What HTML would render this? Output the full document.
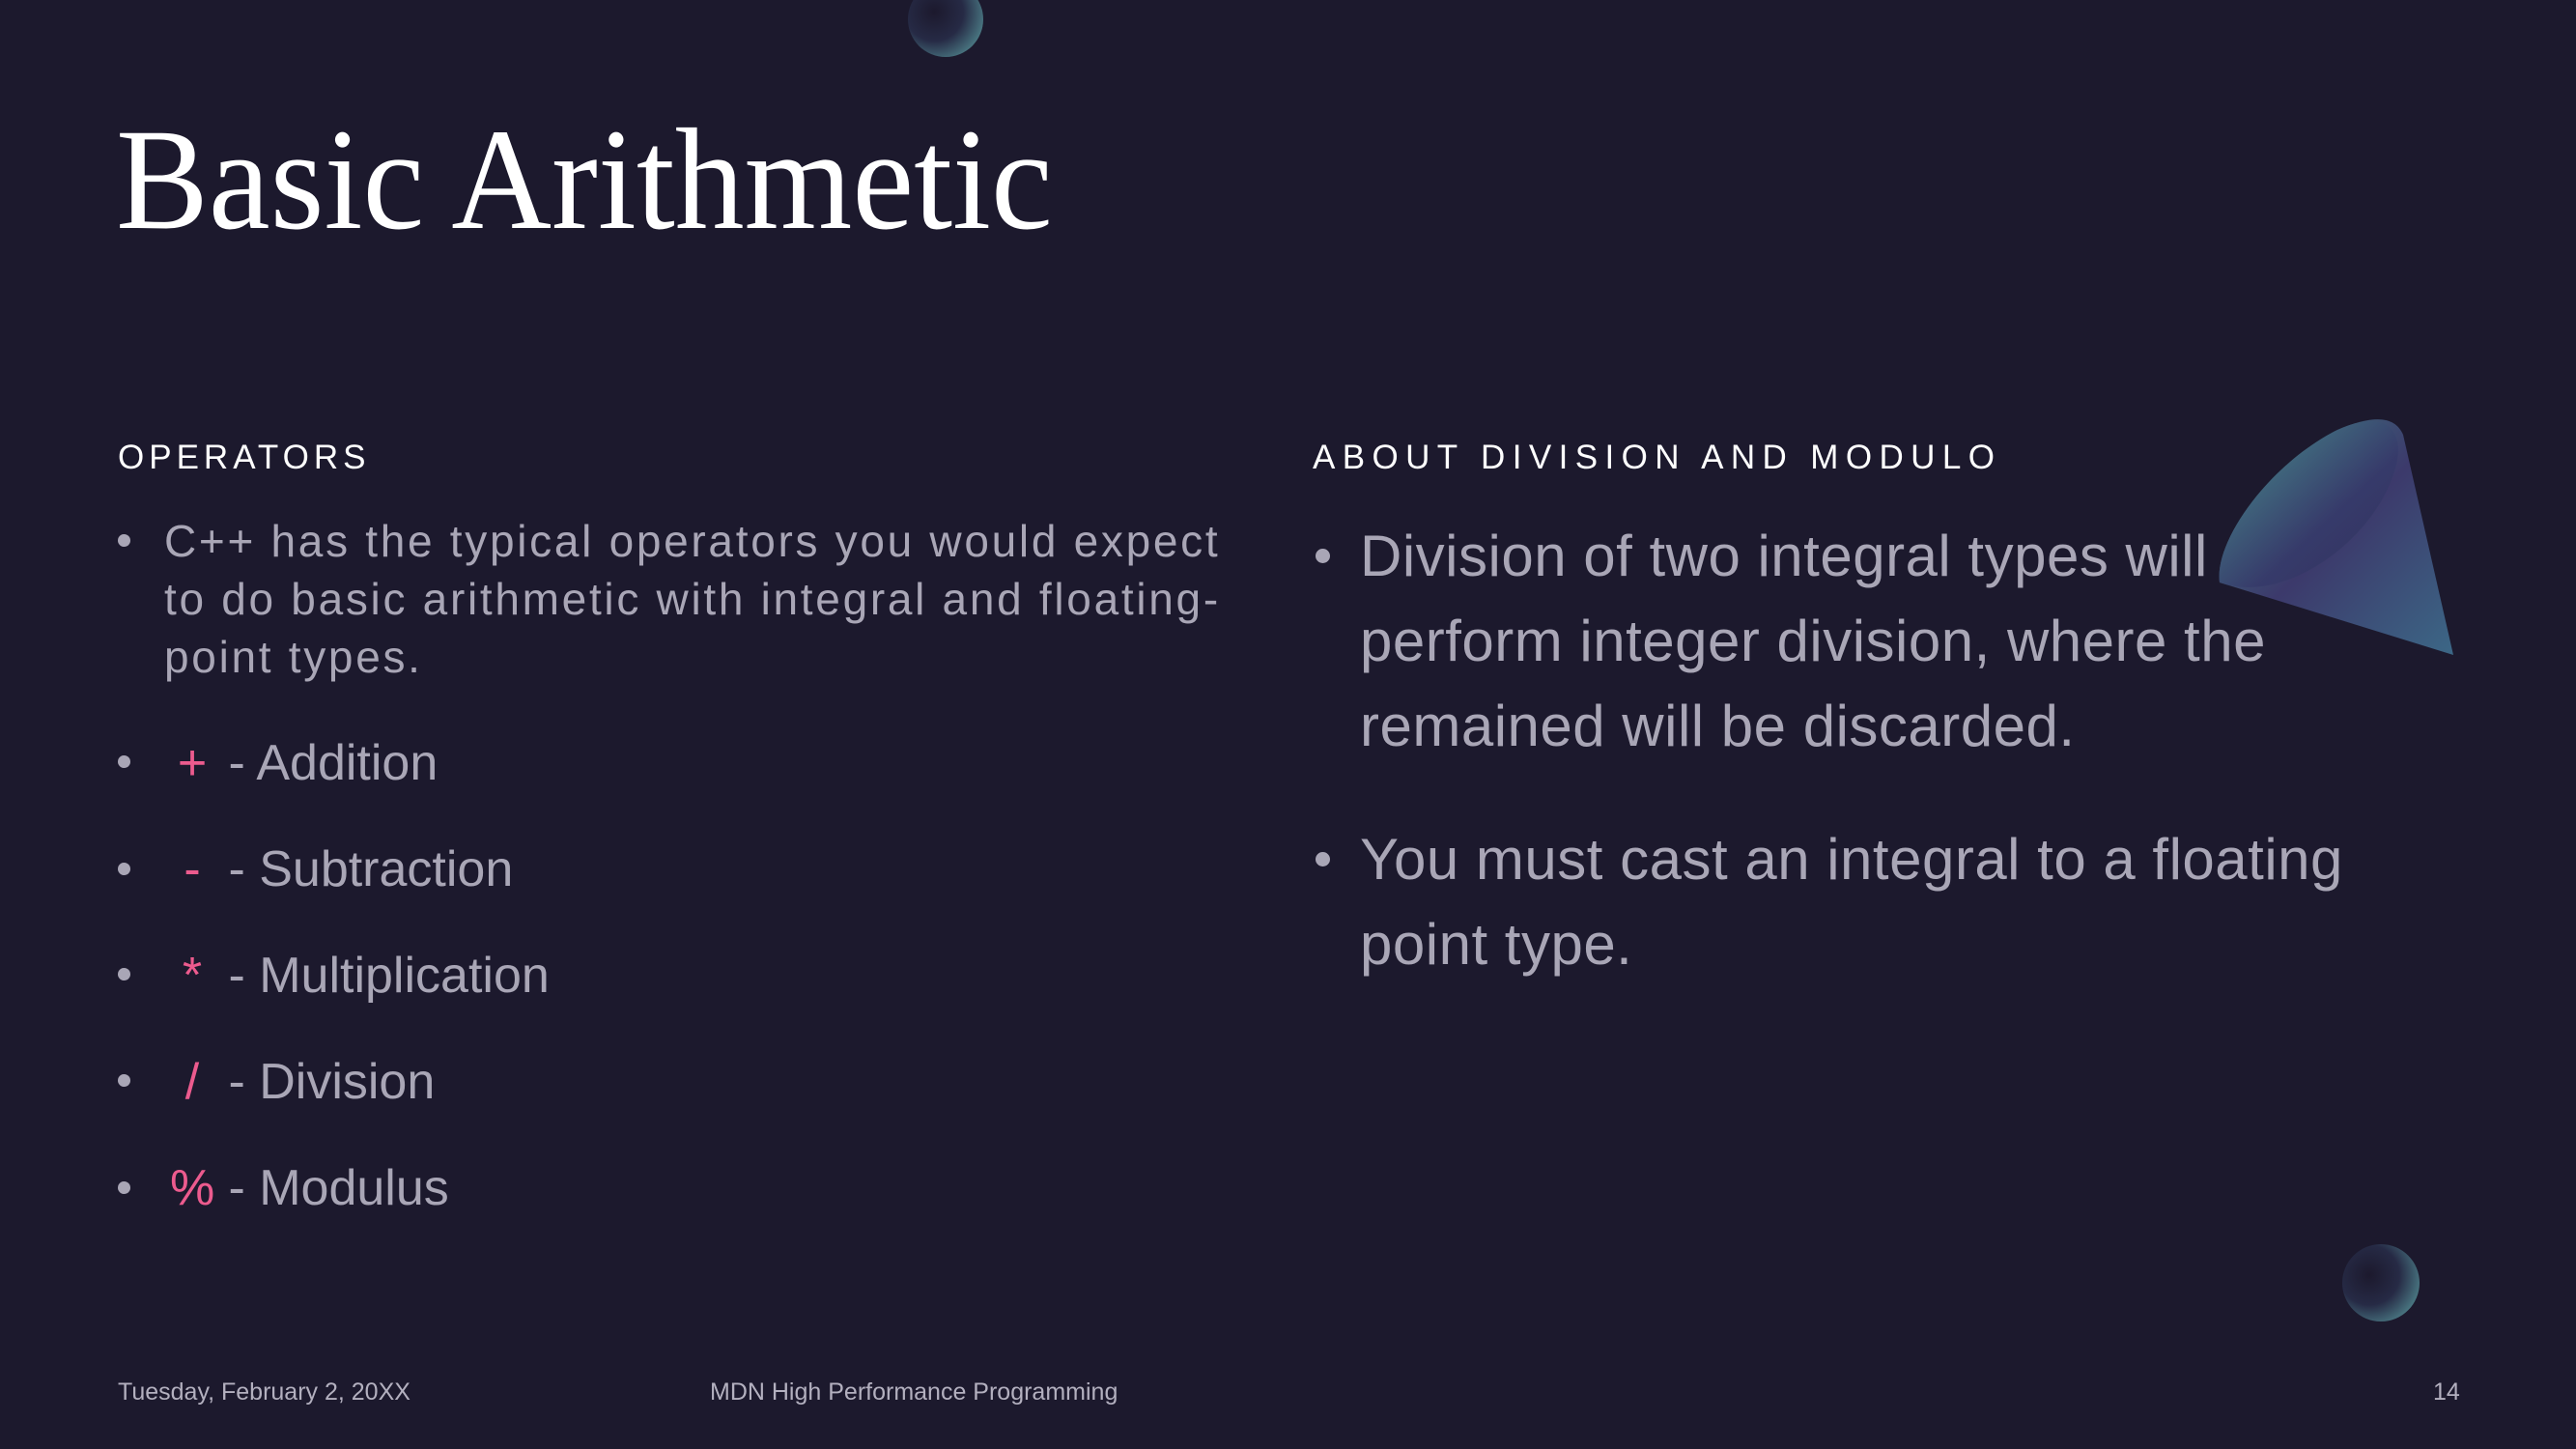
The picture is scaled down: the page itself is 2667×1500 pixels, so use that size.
<!DOCTYPE html>
<html><head><meta charset="utf-8"><style>
html,body{margin:0;padding:0}
body{width:2667px;height:1500px;background:#1c192d;position:relative;overflow:hidden;font-family:"Liberation Sans",sans-serif;color:#a9a6b6}
.a{position:absolute;white-space:nowrap}
.title{font-family:"Liberation Serif",serif;color:#fff;font-size:150px;left:120px;top:106px;line-height:160px;transform:scaleX(0.958);transform-origin:left}
.h{color:#fff;font-size:35px;letter-spacing:5px;line-height:40px}
.l{font-size:46px;line-height:60px;letter-spacing:2.7px}
.it{font-size:52px;line-height:60px}
.r{font-size:60px;line-height:88px;letter-spacing:0.5px}
.b{position:absolute;width:13px;height:13px;border-radius:50%;background:#a9a6b6}
.p{color:#ec5b8e;display:inline-block;width:46px;text-align:center;margin-left:6px}
.f{font-size:25px;line-height:30px;color:#b3b0bf}
</style></head><body>
<svg class="a" style="left:0;top:0" width="2667" height="1500">
<defs>
<radialGradient id="s" cx="0.35" cy="0.4" r="0.7"><stop offset="0" stop-color="#1c192d"/><stop offset="0.55" stop-color="#262a45"/><stop offset="1" stop-color="#4b7b85"/></radialGradient>
<linearGradient id="c" x1="0" y1="0" x2="1" y2="1"><stop offset="0" stop-color="#45908c"/><stop offset="0.5" stop-color="#3f3d72"/><stop offset="1" stop-color="#407090"/></linearGradient>
<linearGradient id="c2" x1="0" y1="0" x2="1" y2="1"><stop offset="0" stop-color="#4a9590"/><stop offset="0.6" stop-color="#363a6a"/><stop offset="1" stop-color="#30325c"/></linearGradient>
</defs>
<circle cx="979" cy="20" r="39" fill="url(#s)"/>
<circle cx="2465" cy="1328" r="40" fill="url(#s)"/>
<path d="M2298 603 C2292 560 2350 480 2420 445 C2460 428 2480 432 2488 450 L2540 678 Z" fill="url(#c)" opacity="0.9"/>
<path d="M2298 603 C2292 560 2350 480 2420 445 C2475 420 2500 450 2470 510 C2440 570 2360 625 2298 603 Z" fill="url(#c2)" opacity="0.9"/>
</svg>
<div class="a title">Basic Arithmetic</div>
<div class="a h" style="left:122px;top:454px">OPERATORS</div>
<div class="a h" style="left:1359px;top:454px;letter-spacing:7.4px">ABOUT DIVISION AND MODULO</div>

<div class="b" style="left:122px;top:553px"></div>
<div class="a l" style="left:170px;top:530px">C++ has the typical operators you would expect<br>to do basic arithmetic with integral and floating-<br>point types.</div>

<div class="b" style="left:122px;top:782px"></div>
<div class="a it" style="left:170px;top:760px"><span class="p">+</span> - Addition</div>
<div class="b" style="left:122px;top:893px"></div>
<div class="a it" style="left:170px;top:870px"><span class="p">-</span> - Subtraction</div>
<div class="b" style="left:122px;top:1002px"></div>
<div class="a it" style="left:170px;top:980px"><span class="p">*</span> - Multiplication</div>
<div class="b" style="left:122px;top:1112px"></div>
<div class="a it" style="left:170px;top:1090px"><span class="p">/</span> - Division</div>
<div class="b" style="left:122px;top:1223px"></div>
<div class="a it" style="left:170px;top:1200px"><span class="p">%</span> - Modulus</div>

<div class="b" style="left:1362px;top:568px;width:15px;height:15px"></div>
<div class="a r" style="left:1408px;top:532px">Division of two integral types will<br>perform integer division, where the<br>remained will be discarded.</div>
<div class="b" style="left:1362px;top:882px;width:15px;height:15px"></div>
<div class="a r" style="left:1408px;top:846px">You must cast an integral to a floating<br>point type.</div>

<div class="a f" style="left:122px;top:1426px">Tuesday, February 2, 20XX</div>
<div class="a f" style="left:735px;top:1426px">MDN High Performance Programming</div>
<div class="a f" style="left:2519px;top:1426px">14</div>
</body></html>
